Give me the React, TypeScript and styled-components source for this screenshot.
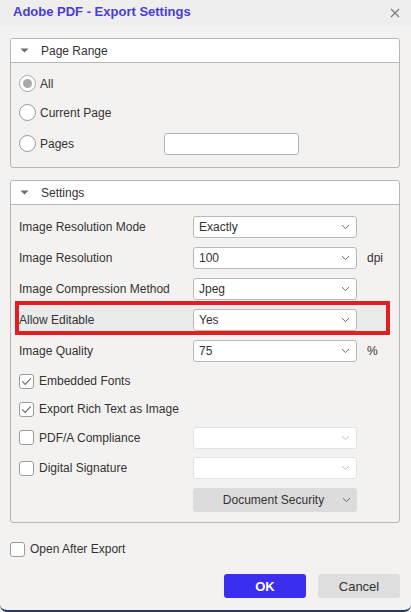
import React from "react";
import styled, { createGlobalStyle, css } from "styled-components";

const GlobalStyle = createGlobalStyle`
  html, body {
    margin: 0;
    padding: 0;
    background: #f3f2f1;
  }
  * { box-sizing: border-box; }
  body {
    font-family: "Liberation Sans", Arial, sans-serif;
    font-size: 12px;
    color: #333;
  }
`;

const Dialog = styled.div`
  width: 411px;
  height: 612px;
  display: flex;
  flex-direction: column;
  background: #f3f2f1;
  border-bottom: 2px solid #243a64;
  border-radius: 0 0 7px 7px;
  overflow: hidden;
`;

const TitleBar = styled.div`
  height: 26px;
  flex: none;
  display: flex;
  align-items: center;
  justify-content: space-between;
  padding: 0 11px 0 13px;
  background: #eeeeee;
`;

const Title = styled.h1`
  margin: -4px 0 0;
  font-size: 13px;
  font-weight: bold;
  color: #4a3cd4;
`;

const CloseButton = styled.button`
  border: 0;
  padding: 0;
  background: none;
  width: 10px;
  height: 10px;
  display: flex;
  align-items: center;
  justify-content: center;
  cursor: pointer;
`;

const Body = styled.div`
  flex: 1;
  display: flex;
  flex-direction: column;
  padding: 12px 11px 0 10px;
`;

const Panel = styled.section<{ $gap?: number }>`
  border: 1px solid #b6b6b6;
  border-radius: 3px;
  margin-top: ${(p) => p.$gap ?? 0}px;
  overflow: hidden;
`;

const PanelHeader = styled.div`
  height: 24px;
  display: flex;
  align-items: center;
  gap: 12px;
  padding-left: 9px;
  background: #fff;
  border-bottom: 1px solid #b6b6b6;
  font-size: 12px;
  color: #333;
`;

const PanelBody = styled.div<{ $pt: number; $pb: number }>`
  display: flex;
  flex-direction: column;
  padding: ${(p) => p.$pt}px 0 ${(p) => p.$pb}px 8px;
`;

const Row = styled.div<{ $h: number; $flag?: boolean }>`
  height: ${(p) => p.$h}px;
  display: flex;
  align-items: center;
  position: relative;
  isolation: isolate;
  ${(p) =>
    p.$flag &&
    css`
      &::before {
        content: "";
        position: absolute;
        left: -4px;
        right: 9px;
        top: -3px;
        bottom: 0px;
        border: 4px solid #e01e24;
        background: #ebebeb;
        z-index: -1;
      }
    `}
`;

const Label = styled.span<{ $w?: number }>`
  width: ${(p) => (p.$w ? `${p.$w}px` : "auto")};
  flex: none;
  font-size: 12px;
  color: #333;
  white-space: nowrap;
`;

const RadioDot = styled.span<{ $on?: boolean }>`
  width: 17px;
  height: 17px;
  flex: none;
  border-radius: 50%;
  border: 1px solid ${(p) => (p.$on ? "#a8a8a8" : "#999")};
  background: #fff;
  margin-right: 4px;
  display: flex;
  align-items: center;
  justify-content: center;
  &::after {
    content: "";
    display: ${(p) => (p.$on ? "block" : "none")};
    width: 9px;
    height: 9px;
    border-radius: 50%;
    background: #a9a9a9;
  }
`;

const TextInput = styled.input`
  width: 135px;
  height: 22px;
  border: 1px solid #b3b3b3;
  border-radius: 3px;
  background: #fff;
  outline: none;
`;

const Check = styled.span<{ $on?: boolean }>`
  width: 15px;
  height: 15px;
  flex: none;
  border: 1px solid #9c9c9c;
  border-radius: 3px;
  background: #fff;
  margin-right: 5px;
  display: flex;
  align-items: center;
  justify-content: center;
`;

const Select = styled.div<{ $disabled?: boolean }>`
  width: 164px;
  height: 22px;
  flex: none;
  display: flex;
  align-items: center;
  justify-content: space-between;
  padding: 0 6px 0 5px;
  background: #fff;
  border: 1px solid ${(p) => (p.$disabled ? "#e3e3e3" : "#b9b9b9")};
  border-radius: 3px;
  font-size: 12px;
  color: #333;
`;

const Unit = styled.span`
  margin-left: 10px;
  font-size: 12px;
  color: #333;
`;

const MenuButton = styled.button`
  width: 164px;
  height: 24px;
  margin-left: 174px;
  display: flex;
  align-items: center;
  padding: 0 6px 0 12px;
  border: 0;
  border-radius: 3px;
  background: #dcdcdc;
  font-family: inherit;
  font-size: 12px;
  color: #333;
  span {
    flex: 1;
    text-align: center;
  }
`;

const FooterCheck = styled.div`
  height: 28px;
  margin-top: 12px;
  display: flex;
  align-items: center;
`;

const Actions = styled.div`
  display: flex;
  justify-content: flex-end;
  gap: 12px;
  margin-top: 11px;
`;

const ActionButton = styled.button<{ $primary?: boolean }>`
  width: 82px;
  height: 24px;
  border: 0;
  border-radius: 3px;
  font-family: inherit;
  font-size: 13px;
  cursor: pointer;
  ${(p) =>
    p.$primary
      ? css`
          background: #3c2ef0;
          color: #fff;
          font-weight: bold;
        `
      : css`
          background: #dedede;
          color: #333;
        `}
`;

const Chevron = ({ faded }: { faded?: boolean }) => (
  <svg width="9" height="6" viewBox="0 0 9 6">
    <path
      d="M1 1.2 L4.5 4.6 L8 1.2"
      fill="none"
      stroke={faded ? "#c4c4c4" : "#6a6a6a"}
      strokeWidth="1"
    />
  </svg>
);

const Caret = () => (
  <svg width="9" height="5" viewBox="0 0 9 5">
    <path d="M0.5 0.5 H8.5 L4.5 4.5 Z" fill="#6b6b6b" />
  </svg>
);

const Tick = () => (
  <svg width="11" height="9" viewBox="0 0 11 9">
    <path d="M1.2 4.4 L4.2 7.4 L9.8 1.4" fill="none" stroke="#6a6a6a" strokeWidth="1.1" />
  </svg>
);

const SelectField = ({ value, disabled }: { value?: string; disabled?: boolean }) => (
  <Select $disabled={disabled}>
    <span>{value ?? ""}</span>
    <Chevron faded={disabled} />
  </Select>
);

export default function App() {
  return (
    <>
      <GlobalStyle />
      <Dialog>
        <TitleBar>
          <Title>Adobe PDF - Export Settings</Title>
          <CloseButton aria-label="Close">
            <svg width="10" height="10" viewBox="0 0 10 10">
              <path d="M1 1 L9 9 M9 1 L1 9" stroke="#7a7a7a" strokeWidth="1.1" />
            </svg>
          </CloseButton>
        </TitleBar>
        <Body>
          <Panel>
            <PanelHeader>
              <Caret />
              Page Range
            </PanelHeader>
            <PanelBody $pt={6} $pb={7}>
              <Row $h={29}>
                <RadioDot $on />
                <Label>All</Label>
              </Row>
              <Row $h={29}>
                <RadioDot />
                <Label>Current Page</Label>
              </Row>
              <Row $h={33}>
                <RadioDot />
                <Label $w={124}>Pages</Label>
                <TextInput />
              </Row>
            </PanelBody>
          </Panel>

          <Panel $gap={12}>
            <PanelHeader>
              <Caret />
              Settings
            </PanelHeader>
            <PanelBody $pt={6} $pb={5}>
              <Row $h={31}>
                <Label $w={174}>Image Resolution Mode</Label>
                <SelectField value="Exactly" />
              </Row>
              <Row $h={31}>
                <Label $w={174}>Image Resolution</Label>
                <SelectField value="100" />
                <Unit>dpi</Unit>
              </Row>
              <Row $h={31}>
                <Label $w={174}>Image Compression Method</Label>
                <SelectField value="Jpeg" />
              </Row>
              <Row $h={31} $flag>
                <Label $w={174}>Allow Editable</Label>
                <SelectField value="Yes" />
              </Row>
              <Row $h={31}>
                <Label $w={174}>Image Quality</Label>
                <SelectField value="75" />
                <Unit>%</Unit>
              </Row>
              <Row $h={30}>
                <Check $on>
                  <Tick />
                </Check>
                <Label>Embedded Fonts</Label>
              </Row>
              <Row $h={26}>
                <Check $on>
                  <Tick />
                </Check>
                <Label>Export Rich Text as Image</Label>
              </Row>
              <Row $h={31}>
                <Check />
                <Label $w={154}>PDF/A Compliance</Label>
                <SelectField disabled />
              </Row>
              <Row $h={30}>
                <Check />
                <Label $w={154}>Digital Signature</Label>
                <SelectField disabled />
              </Row>
              <Row $h={34}>
                <MenuButton>
                  <span>Document Security</span>
                  <Chevron />
                </MenuButton>
              </Row>
            </PanelBody>
          </Panel>

          <FooterCheck>
            <Check />
            <Label>Open After Export</Label>
          </FooterCheck>

          <Actions>
            <ActionButton $primary>OK</ActionButton>
            <ActionButton>Cancel</ActionButton>
          </Actions>
        </Body>
      </Dialog>
    </>
  );
}
